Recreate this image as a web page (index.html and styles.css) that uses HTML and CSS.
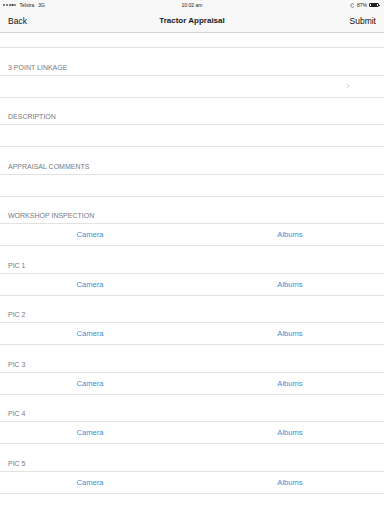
FILE: index.html
```html
<!DOCTYPE html>
<html>
<head>
<meta charset="utf-8">
<link rel="stylesheet" href="styles.css">
</head>
<body>
<div class="top">
  <div class="status">
    <div class="st-left">
      <span class="dots"><i class="on"></i><i class="on"></i><i class="on"></i><i></i><i></i></span>
      <span>Telstra</span><span class="net">3G</span>
    </div>
    <div class="st-mid">10:02 am</div>
    <div class="st-right">
      <svg class="lock" width="5" height="5" viewBox="0 0 5 5"><path d="M3.8 1.2 A1.8 1.8 0 1 0 3.8 3.8" fill="none" stroke="#555" stroke-width="0.7"/></svg>
      <span>87%</span>
      <span class="battery"><span class="fill"></span></span>
    </div>
  </div>
  <div class="nav">
    <span class="nav-btn">Back</span>
    <span class="nav-title">Tractor Appraisal</span>
    <span class="nav-btn">Submit</span>
  </div>
</div>

<div class="row first"></div>

<div class="header">3 POINT LINKAGE</div>
<div class="row bordered disclosure">
  <svg width="4" height="6" viewBox="0 0 4 6"><path d="M0.7 0.6 L3.1 3 L0.7 5.4" fill="none" stroke="#c4c4c9" stroke-width="0.8"/></svg>
</div>

<div class="header">DESCRIPTION</div>
<div class="row bordered"></div>

<div class="header">APPRAISAL COMMENTS</div>
<div class="row bordered"></div>

<div class="header">WORKSHOP INSPECTION</div>
<div class="row bordered actions"><span>Camera</span><span>Albums</span></div>

<div class="header">PIC 1</div>
<div class="row bordered actions"><span>Camera</span><span>Albums</span></div>

<div class="header">PIC 2</div>
<div class="row bordered actions"><span>Camera</span><span>Albums</span></div>

<div class="header">PIC 3</div>
<div class="row bordered actions"><span>Camera</span><span>Albums</span></div>

<div class="header">PIC 4</div>
<div class="row bordered actions"><span>Camera</span><span>Albums</span></div>

<div class="header">PIC 5</div>
<div class="row bordered actions"><span>Camera</span><span>Albums</span></div>
</body>
</html>
```
FILE: styles.css
```css
* { box-sizing: border-box; }
html, body {
  margin: 0;
  padding: 0;
  background: #ffffff;
  font-family: "Liberation Sans", Arial, sans-serif;
  width: 384px;
  height: 512px;
  overflow: hidden;
}
.top {
  background: #f8f8f8;
  border-bottom: 1px solid #d4d4d4;
}
.status {
  height: 10px;
  display: flex;
  align-items: center;
  justify-content: space-between;
  padding: 0 4px 0 3px;
  font-size: 5px;
  color: #222;
  position: relative;
}
.st-left {
  display: flex;
  align-items: center;
  gap: 2px;
}
.net { margin-left: 2px; }
.dots {
  display: flex;
  gap: 0.5px;
  margin-right: 1px;
}
.dots i {
  display: block;
  width: 2.3px;
  height: 2.3px;
  border-radius: 50%;
  border: 0.4px solid #444;
}
.dots i.on { background: #222; }
.st-mid {
  position: absolute;
  left: 0;
  right: 0;
  text-align: center;
  top: 2px;
  line-height: 6px;
}
.st-right {
  display: flex;
  align-items: center;
  gap: 2px;
}
.lock { display: block; }
.battery {
  position: relative;
  width: 10px;
  height: 4.5px;
  border: 0.6px solid #222;
  border-radius: 1px;
  padding: 0.5px;
  display: flex;
  margin-right: 1px;
}
.battery::after {
  content: "";
  position: absolute;
  right: -2px;
  top: 1px;
  width: 1px;
  height: 1.6px;
  background: #222;
}
.fill {
  display: block;
  width: 87%;
  height: 100%;
  background: #222;
}
.nav {
  height: 22px;
  display: flex;
  align-items: center;
  justify-content: space-between;
  padding: 0 8px 1px 8px;
  position: relative;
}
.nav-btn {
  font-size: 8.5px;
  color: #111;
}
.nav-title {
  position: absolute;
  left: 0;
  right: 0;
  text-align: center;
  font-size: 8px;
  font-weight: bold;
  color: #1a1a1a;
  pointer-events: none;
}
.row {
  background: #fff;
  height: 23px;
}
.row.first {
  height: 15px;
  border-bottom: 1px solid #e2e2e2;
}
.row.bordered {
  border-top: 1px solid #e2e2e2;
  border-bottom: 1px solid #e2e2e2;
}
.header {
  height: 26.5px;
  display: flex;
  align-items: flex-end;
  padding: 0 0 3px 8px;
  font-size: 7px;
  line-height: 8px;
  color: #7a7a7f;
}
.disclosure {
  display: flex;
  align-items: center;
  justify-content: flex-end;
  padding-right: 34px;
}
.disclosure svg { display: block; }
.actions {
  display: grid;
  grid-template-columns: 180px 188px;
  column-gap: 16px;
  align-items: center;
  font-size: 7.6px;
  color: #3d8fd6;
}
.actions span { text-align: center; }
```
